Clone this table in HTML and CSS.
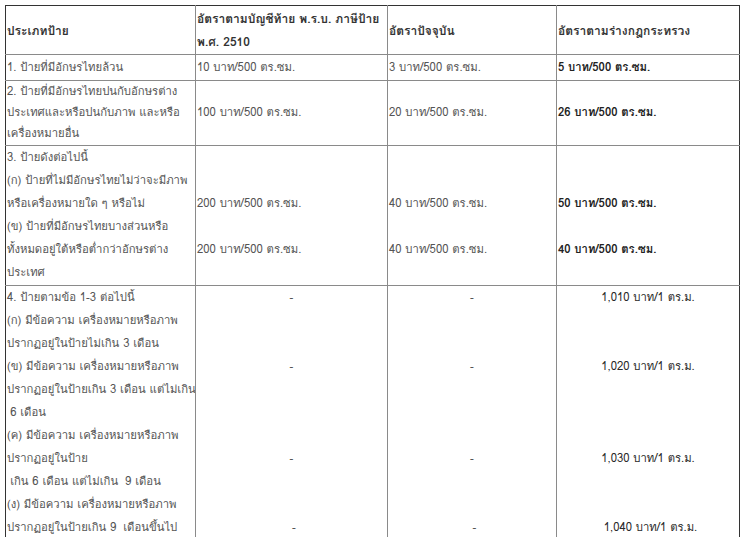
FILE: index.html
```html
<!DOCTYPE html>
<html lang="th">
<head>
<meta charset="utf-8">
<title>อัตราภาษีป้าย</title>
<link rel="stylesheet" href="styles.css">
</head>
<body>
<table class="rates">
  <colgroup>
    <col class="c1"><col class="c2"><col class="c3"><col class="c4">
  </colgroup>
  <tr class="head">
    <th>ประเภทป้าย</th>
    <th>อัตราตามบัญชีท้าย พ.ร.บ. ภาษีป้าย<br>พ.ศ. 2510</th>
    <th>อัตราปัจจุบัน</th>
    <th>อัตราตามร่างกฎกระทรวง</th>
  </tr>
  <tr class="r1">
    <td>1. ป้ายที่มีอักษรไทยล้วน</td>
    <td>10 บาท/500 ตร.ซม.</td>
    <td>3 บาท/500 ตร.ซม.</td>
    <td class="new">5 บาท/500 ตร.ซม.</td>
  </tr>
  <tr class="r2">
    <td>2. ป้ายที่มีอักษรไทยปนกับอักษรต่าง<br>ประเทศและหรือปนกับภาพ และหรือ<br>เครื่องหมายอื่น</td>
    <td>100 บาท/500 ตร.ซม.</td>
    <td>20 บาท/500 ตร.ซม.</td>
    <td class="new">26 บาท/500 ตร.ซม.</td>
  </tr>
  <tr class="r3">
    <td>3. ป้ายดังต่อไปนี้<br>(ก) ป้ายที่ไม่มีอักษรไทยไม่ว่าจะมีภาพ<br>หรือเครื่องหมายใด ๆ หรือไม่<br>(ข) ป้ายที่มีอักษรไทยบางส่วนหรือ<br>ทั้งหมดอยู่ใต้หรือต่ำกว่าอักษรต่าง<br>ประเทศ</td>
    <td>&nbsp;<br>&nbsp;<br>200 บาท/500 ตร.ซม.<br>&nbsp;<br>200 บาท/500 ตร.ซม.<br>&nbsp;</td>
    <td>&nbsp;<br>&nbsp;<br>40 บาท/500 ตร.ซม.<br>&nbsp;<br>40 บาท/500 ตร.ซม.<br>&nbsp;</td>
    <td class="new">&nbsp;<br>&nbsp;<br>50 บาท/500 ตร.ซม.<br>&nbsp;<br>40 บาท/500 ตร.ซม.<br>&nbsp;</td>
  </tr>
  <tr class="r4">
    <td>4. ป้ายตามข้อ 1-3 ต่อไปนี้<br>(ก) มีข้อความ เครื่องหมายหรือภาพ<br>ปรากฏอยู่ในป้ายไม่เกิน 3 เดือน<br>(ข) มีข้อความ เครื่องหมายหรือภาพ<br>ปรากฏอยู่ในป้ายเกิน 3 เดือน แต่ไม่เกิน<br>&nbsp;6 เดือน<br>(ค) มีข้อความ เครื่องหมายหรือภาพ<br>ปรากฏอยู่ในป้าย<br>&nbsp;เกิน 6 เดือน แต่ไม่เกิน&nbsp; 9 เดือน<br>(ง) มีข้อความ เครื่องหมายหรือภาพ<br>ปรากฏอยู่ในป้ายเกิน 9&nbsp; เดือนขึ้นไป</td>
    <td class="center">-<br>&nbsp;<br>&nbsp;<br>-<br>&nbsp;<br>&nbsp;<br>&nbsp;<br>-<br>&nbsp;<br>&nbsp;<br><span class="nudge">-</span></td>
    <td class="center">-<br>&nbsp;<br>&nbsp;<br>-<br>&nbsp;<br>&nbsp;<br>&nbsp;<br>-<br>&nbsp;<br>&nbsp;<br><span class="nudge">-</span></td>
    <td class="center new4">1,010 บาท/1 ตร.ม.<br>&nbsp;<br>&nbsp;<br>1,020 บาท/1 ตร.ม.<br>&nbsp;<br>&nbsp;<br>&nbsp;<br>1,030 บาท/1 ตร.ม.<br>&nbsp;<br>&nbsp;<br><span class="nudge">1,040 บาท/1 ตร.ม.</span></td>
  </tr>
</table>
</body>
</html>
```

FILE: styles.css
```css
html, body {
  margin: 0;
  padding: 0;
  background: #ffffff;
}

body {
  font-family: "Loma", "Noto Sans Thai Looped", "DejaVu Sans", sans-serif;
  font-size: 12px;
  color: #555555;
}

.rates {
  margin: 5px 0 0 5px;
  width: 734px;
  border-collapse: collapse;
  table-layout: fixed;
}

.c1 { width: 190px; }
.c2 { width: 192px; }
.c3 { width: 169px; }
.c4 { width: 183px; }

.rates th,
.rates td {
  border: 1px solid #8a8a8a;
  padding: 1px 1px;
  line-height: 23px;
  text-align: left;
  vertical-align: middle;
  white-space: nowrap;
  overflow: hidden;
}

.rates td {
  font-size: 11.3px;
}

.rates tr > :first-child { border-left-color: #333333; }
.rates tr > :last-child { border-right-color: #333333; }
.rates .head > th { border-top-color: #333333; }

.rates th {
  font-weight: bold;
  color: #333333;
}

.rates .new {
  font-weight: bold;
  color: #222222;
}

.r2 td { line-height: 21px; padding-top: 0; }

.r3 td { padding-top: 0; }

.r4 td { vertical-align: top; padding-top: 0; }

.rates .center { text-align: center; }

.new4 { color: #2a2a2a; }

.nudge { padding-left: 5px; }
```
